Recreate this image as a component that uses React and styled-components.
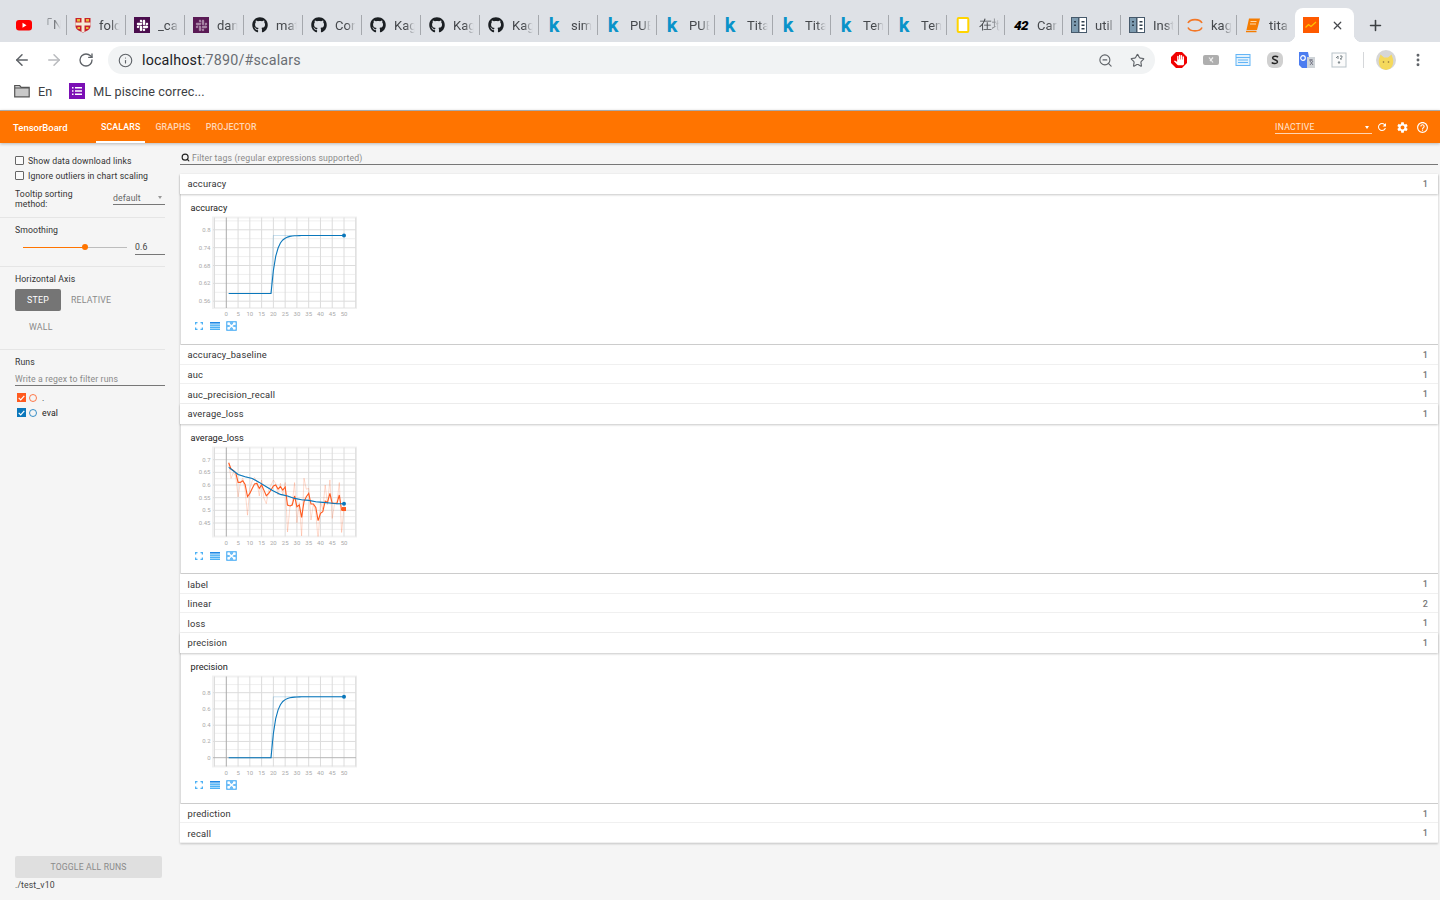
import React from "react";
import styled, { createGlobalStyle } from "styled-components";
import { ArrowLeft, ArrowRight, RotateCw, Info, ZoomOut, Star, X, Plus, MoreVertical, Search } from "lucide-react";
import { FaGithub, FaSlack } from "react-icons/fa";
import { MdRefresh, MdSettings, MdHelpOutline, MdPanTool } from "react-icons/md";

const Global = createGlobalStyle`
  html, body { margin: 0; padding: 0; background: #f5f5f5; }
  body { font-family: Roboto, "Liberation Sans", sans-serif; overflow: hidden; }
  * { box-sizing: border-box; }
`;

const Page = styled.div`display:flex;flex-direction:column;width:1440px;height:900px;overflow:hidden;`;

/* browser chrome */
const TabStrip = styled.div`display:flex;height:42px;background:#dee1e6;padding:8px 0 0 8px;align-items:stretch;`;
const Tab = styled.div`
  position:relative;display:flex;align-items:center;width:${p=>p.$w}px;height:34px;padding-left:8px;gap:8px;flex:none;
  &::after{content:"";display:${p=>p.$last?"none":"block"};position:absolute;right:0;top:7px;height:20px;width:1px;background:#a5a8ad;}
`;
const ActiveTab = styled.div`
  position:relative;display:flex;align-items:center;width:59px;height:34px;padding-left:8px;background:#fff;border-radius:8px 8px 0 0;flex:none;
  &::before,&::after{content:"";position:absolute;bottom:0;width:8px;height:8px;}
  &::before{left:-8px;background:radial-gradient(circle at 0 0,transparent 8px,#fff 8.5px);}
  &::after{right:-8px;background:radial-gradient(circle at 100% 0,transparent 8px,#fff 8.5px);}
`;
const TabClose = styled.span`display:flex;margin-left:12px;color:#45484c;`;
const NewTab = styled.span`display:flex;align-items:center;margin-left:13px;color:#3c4043;`;
const TabTitle = styled.span`
  display:block;width:26px;flex:none;overflow:hidden;white-space:nowrap;font-size:13px;color:#45484c;
  -webkit-mask-image:linear-gradient(to right,#000 45%,transparent 80%);mask-image:linear-gradient(to right,#000 45%,transparent 80%);
`;
const IconSlot = styled.span`display:flex;width:16px;height:16px;align-items:center;justify-content:center;flex:none;`;
const KaggleK = styled.span`font:700 20px/16px Roboto,sans-serif;color:#0a93c9;margin-left:-2px;`;
const FortyTwo = styled.span`font:italic 900 13.5px/16px Roboto,sans-serif;color:#000;letter-spacing:-.5px;`;
const SlackSquare = styled.span`display:flex;width:16px;height:16px;align-items:center;justify-content:center;background:${p=>p.$dim?"#5a1a55":"#4a0d4d"};color:${p=>p.$dim?"#a784a5":"#fff"};`;

const Toolbar = styled.div`display:flex;align-items:center;height:36px;background:#fff;padding-left:6px;`;
const NavBtn = styled.span`display:flex;width:32px;justify-content:center;color:${p=>p.$off?"#b9bbbe":"#5f6368"};`;
const Omnibox = styled.div`display:flex;align-items:center;flex:1;height:28px;margin-left:6px;border-radius:14px;background:#f1f3f4;padding:0 2px 0 10px;color:#5f6368;`;
const Url = styled.span`font-size:14.3px;letter-spacing:.17px;margin-left:9px;flex:1;color:#6a6e73;& b{font-weight:400;color:#202124;}`;
const OmniIcon = styled.span`display:flex;width:32px;justify-content:center;color:#5f6368;`;
const Extensions = styled.div`display:flex;align-items:center;margin-left:8px;margin-right:12px;`;
const Ext = styled.span`display:flex;width:32px;justify-content:center;`;
const ExtDivider = styled.span`width:1px;height:16px;background:#d5d7da;margin:0 12px 0 8px;`;
const Avatar = styled.span`display:flex;width:20px;height:20px;border-radius:50%;background:#d6d6d6;overflow:hidden;`;
const MenuBtn = styled.span`display:flex;width:20px;margin-left:12px;justify-content:center;color:#5f6368;`;

const Bookmarks = styled.div`display:flex;align-items:center;height:32px;padding-bottom:6px;background:#fff;padding-left:14px;font-size:12.6px;color:#3c4043;`;
const Bookmark = styled.span`display:flex;align-items:center;gap:8px;margin-right:${p=>p.$mr||0}px;letter-spacing:.1px;`;
const FormsIcon = styled.span`display:flex;width:16px;height:16px;background:#7b0fb5;align-items:center;justify-content:center;`;

/* tensorboard header */
const Header = styled.header`
  display:flex;align-items:center;height:33px;background:#ff7400;border-top:1px solid #a9a9a9;color:#fff;
  box-shadow:0 1px 3px rgba(0,0,0,.25);position:relative;z-index:2;padding-left:13px;
`;
const Brand = styled.span`font-size:9.5px;width:83px;font-weight:500;`;
const NavTab = styled.span`
  display:flex;align-items:center;height:32px;padding:0 5px;margin-right:${p=>p.$mr}px;font-size:8.8px;font-weight:500;letter-spacing:.14px;
  color:${p=>p.$on?"#fff":"rgba(255,255,255,.72)"};
  border-bottom:2px solid ${p=>p.$on?"#fff":"transparent"};padding-top:2px;
`;
const Spacer = styled.span`flex:1;`;
const RunSelect = styled.span`
  display:flex;justify-content:space-between;align-items:center;width:97px;height:12px;border-bottom:1px solid rgba(255,255,255,.7);
  font-size:8.6px;color:rgba(255,255,255,.85);margin-top:1px;letter-spacing:.3px;
`;
const Caret = styled.span`width:0;height:0;border:2.5px solid transparent;border-top:3px solid ${p=>p.$c};border-bottom:0;margin-right:${p=>p.$mr||0}px;`;
const HeadIcon = styled.span`display:flex;width:20px;justify-content:center;color:#fff;`;
const HeadIcons = styled.span`display:flex;margin-right:8px;margin-left:0;`;

/* body */
const Body = styled.div`display:flex;flex:1;min-height:0;background:#f5f5f5;`;
const Sidebar = styled.aside`display:flex;flex-direction:column;width:180px;flex:none;font-size:8.7px;color:#333;letter-spacing:.11px;`;
const Section = styled.section`width:165px;padding:${p=>p.$pt}px 0 ${p=>p.$pb}px 15px;border-bottom:${p=>p.$last?"none":"1px solid #e5e5e5"};`;
const CheckRow = styled.label`display:flex;align-items:center;height:15px;gap:4px;`;
const Check = styled.span`width:9px;height:9px;border:1px solid #666;border-radius:1px;background:#fafafa;`;
const TooltipRow = styled.div`display:flex;justify-content:space-between;margin-top:6px;line-height:10px;`;
const Select = styled.div`display:flex;justify-content:space-between;align-items:center;width:52px;height:16px;padding-top:2px;border-bottom:1px solid #777;color:#666;align-self:flex-start;`;
const Label = styled.div`line-height:10px;height:10px;color:#333;`;
const SliderRow = styled.div`display:flex;align-items:center;height:16px;margin-top:4px;padding-left:8px;`;
const Track = styled.div`position:relative;width:104px;height:1px;background:#bdbdbd;`;
const TrackFill = styled.div`height:1px;background:#ff7400;`;
const Knob = styled.span`position:absolute;top:-3px;width:6px;height:6px;border-radius:50%;background:#ff7400;`;
const NumInput = styled.div`width:30px;height:15px;margin-left:8px;padding-top:1px;border-bottom:1px solid #777;font-size:8.7px;line-height:12px;color:#444;`;
const AxisGroup = styled.div`display:flex;flex-wrap:wrap;row-gap:5px;margin-top:5px;`;
const AxisBtn = styled.span`
  display:flex;align-items:center;height:22px;padding:0 ${p=>p.$on?12:p.$p}px;border-radius:2px;font-size:8.8px;letter-spacing:.22px;
  background:${p=>p.$on?"#757575":"transparent"};color:${p=>p.$on?"#fff":"#8a8a8a"};
`;
const RunFilter = styled.div`height:12px;margin-top:7px;border-bottom:1px solid #777;color:#8a8a8a;line-height:10px;font-size:8.7px;letter-spacing:.14px;`;
const RunRow = styled.div`display:flex;align-items:center;height:15px;padding-left:2px;color:#222;`;
const RunBox = styled.span`display:flex;width:9px;height:9px;background:${p=>p.$c};align-items:center;justify-content:center;`;
const RunRing = styled.span`width:8px;height:8px;margin:0 5px 0 3px;border-radius:50%;border:1px solid ${p=>p.$c};opacity:.8;`;
const RunGap = styled.div`height:4px;`;
const SideFoot = styled.div`margin-top:auto;padding:0 0 10px 15px;`;
const ToggleAll = styled.div`display:flex;width:147px;height:22px;align-items:center;justify-content:center;background:#dfdfdf;border-radius:2px;color:#8a8a8a;font-size:8.6px;letter-spacing:.17px;`;
const LogDir = styled.div`margin-top:2px;height:10px;line-height:10px;color:#444;`;

const Main = styled.main`flex:1;min-width:0;padding-right:2px;`;
const TagFilter = styled.div`display:flex;align-items:center;gap:2px;height:13px;margin:9px 0;border-bottom:1px solid #777;font-size:8.7px;color:#8a8a8a;letter-spacing:.15px;padding-bottom:1px;`;
const FilterIcon = styled.span`display:flex;margin-left:1px;color:#222;`;
const Pane = styled.div`box-shadow:0 1px 2px rgba(0,0,0,.2);background:#fff;`;
const Row = styled.div`
  display:flex;justify-content:space-between;align-items:center;height:19.6px;padding:0 10px 0 7.5px;background:#fff;font-size:9.3px;color:#333;letter-spacing:.2px;
  box-shadow:${p=>p.$open?"0 1px 2px rgba(0,0,0,.22)":"inset 0 -1px 0 #f0f0f0"};position:relative;
`;
const Count = styled.span`font-size:9px;color:#777;font-weight:500;`;
const Card = styled.div`height:${p=>p.$h}px;padding:8px 0 0 0;background:#fff;border-left:1px solid #ddd;box-shadow:inset 0 -1px 0 #ccc;`;
const CardTitle = styled.div`height:12px;line-height:12px;padding-left:9.5px;font-size:9.2px;color:#222;`;
const ChartSvg = styled.svg`display:block;margin-left:-1px;`;
const ChartTools = styled.div`display:flex;height:14px;padding-left:10px;`;
const Tool = styled.span`display:flex;width:16px;justify-content:center;align-items:center;`;

const Favicon = ({ k }) => {
  if (k === "yt") return <svg width="16" height="16" viewBox="0 0 16 16"><rect y="3" width="16" height="10.5" rx="3" fill="#f00"/><path d="M6.5 5.8v5l4-2.5z" fill="#fff"/></svg>;
  if (k === "cam") return <svg width="16" height="16" viewBox="0 0 16 16"><path d="M.5 1h15v8c0 3.500-3.500 5-7.500 6.500C4 14 .5 12.500.5 9z" fill="#c8202c"/><path d="M6.500 1h3v14h-3zM.5 5.500h15v3H.5z" fill="#f4ead6"/><path d="M2 2h3v2.500H2zM11 2h3v2.500h-3zM2.500 10h2.500v2H2.500zM11 10h2.500v2H11z" fill="#e8b93a"/></svg>;
  if (k === "slack") return <SlackSquare><FaSlack size={13}/></SlackSquare>;
  if (k === "slack2") return <SlackSquare $dim><FaSlack size={13}/></SlackSquare>;
  if (k === "gh") return <FaGithub size={16} color="#1b1f23"/>;
  if (k === "k") return <KaggleK>k</KaggleK>;
  if (k === "yellow") return <svg width="16" height="16" viewBox="0 0 16 16"><rect x="2.700" y="1" width="10.600" height="14" rx="1" fill="#fff" stroke="#ffd400" strokeWidth="2"/></svg>;
  if (k === "42") return <FortyTwo>42</FortyTwo>;
  if (k === "doc") return <svg width="16" height="16" viewBox="0 0 16 16"><rect width="16" height="16" fill="#46596b"/><rect x="1" y="1" width="6" height="14" fill="#7d9bb0"/><rect x="8.500" y="1" width="6.500" height="14" fill="#fff"/><path d="M3 4h2v1.500H3zM3 7.500h2V9H3zM10.500 4h3v1.500h-3zM10.500 7.500h3V9h-3zM10.500 11h3v1.500h-3z" fill="#2f3e4c"/></svg>;
  if (k === "jup") return <svg width="16" height="16" viewBox="0 0 16 16" fill="none" stroke="#f37726" strokeWidth="1.600"><path d="M1 6c2-4.500 12-4.500 14 0"/><path d="M1 10.500c2 4.500 12 4.500 14 0"/></svg>;
  if (k === "book") return <svg width="16" height="16" viewBox="0 0 16 16"><path d="M4 1.500h11l-3 11.500H1.500z" fill="#f57c00"/><path d="M1 14.500h10.500" stroke="#f57c00" strokeWidth="1.500"/><path d="M5.500 4.500h6M5 7h6" stroke="#ffd9a8"/></svg>;
  return <svg width="16" height="16" viewBox="0 0 16 16"><rect width="16" height="16" fill="#ff5a00"/><path d="M2.500 10.500l3-3 2.500 2 5-4.500" fill="none" stroke="#ffc400" strokeWidth="1.200"/></svg>;
};

const tabs = [
  ["yt","「N"],["cam","fold"],["slack","_ca"],["slack2","dan"],["gh","mat"],["gh","Cor"],["gh","Kag"],["gh","Kag"],["gh","Kag"],
  ["k","sim"],["k","PUB"],["k","PUB"],["k","Tita"],["k","Tita"],["k","Ten"],["k","Ten"],["yellow","在地"],["42","Car"],["doc","util"],["doc","Inst"],["jup","kag"],["book","tita"],
];

const X_OF = s => 46.3 + s * 2.354; // svg x for a step
const STEPS = Array.from({ length: 50 }, (_, i) => i + 1);
const XTICKS = [0,5,10,15,20,25,30,35,40,45,50];

const stepUp = (lo, hi) => {
  let s = lo;
  return STEPS.map(t => { if (t >= 20) s = hi + (s - hi) * 0.6; return [t, s]; });
};
const rawStep = (lo, hi) => [[1,lo],[19,lo],[20,hi],[50,hi]];

const lossZ = [113,132,136,143,172,172,167,178,215,205,190,177,175,190,180,196,212,205,195,183,180,192,185,195,186,240,243,240,213,245,240,277,230,215,205,237,237,247,287,265,260,228,232,205,235,235,235,210,255,252];
const lossVal = lossZ.map(y => 0.7 - (y - 104) / 759.6);
const lossSmooth = lossVal.map((v, i) => [i + 1, v]);
const lossRaw = lossVal.map((v, i) => [i + 1, i === 0 ? v : (v - 0.6 * lossVal[i - 1]) / 0.4]);
const evalZ = [[1,127],[2,132],[5,148],[8,155],[11,160],[14,172],[17,185],[20,198],[23,208],[26,213],[29,220],[32,224],[35,226],[38,230],[41,232],[44,234],[47,236],[50,236]];
const evalVal = evalZ.map(([s, y]) => [s, 0.7 - (y - 104) / 759.6]);

const BLUE = "#0a77bb", ORANGE = "#ff5a1f";

const Chart = ({ id, ticks, v0, y0, k, h, series, zero }) => {
  const plotTop = 3.5, plotBottom = plotTop + h;
  const Y = v => y0 + (v0 - v) * k;
  const step = Math.abs(ticks[1] - ticks[0]);
  const minors = ticks.map(t => t - step / 2);
  minors.push(ticks[0] + step / 2);
  const path = pts => pts.map((p, i) => `${i ? "L" : "M"}${X_OF(p[0]).toFixed(1)} ${Y(p[1]).toFixed(1)}`).join("");
  return (
    <ChartSvg width="180" height="105" viewBox="0 0 180 105">
      <defs><clipPath id={id}><rect x="33" y={plotTop} width="143" height={h}/></clipPath></defs>
      <rect x="33" y={plotTop} width="143" height={h} fill="none" stroke="#f1f1f1" strokeWidth="2"/>
      {minors.map((v, i) => Y(v) > plotTop && Y(v) < plotBottom && <line key={i} x1="33" x2="176" y1={Y(v)} y2={Y(v)} stroke="#efefef"/>)}
      {[-5,5,10,15,20,25,30,35,40,45,50,55].map(s => <line key={s} x1={X_OF(s)} x2={X_OF(s)} y1={plotTop} y2={plotBottom} stroke="#dcdcdc"/>)}
      {ticks.map(t => <line key={t} x1="33" x2="176" y1={Y(t)} y2={Y(t)} stroke={zero && t === 0 ? "#b5b5b5" : "#dcdcdc"}/>)}
      <line x1={X_OF(0)} x2={X_OF(0)} y1={plotTop} y2={plotBottom} stroke="#aaa"/>
      {ticks.map(t => <text key={t} x="30.500" y={Y(t) + 2} textAnchor="end" fontSize="6" fill="#aaa" fontFamily="Roboto">{t}</text>)}
      {XTICKS.map(s => <text key={s} x={X_OF(s)} y={plotBottom + 8} textAnchor="middle" fontSize="6" fill="#aaa" fontFamily="Roboto">{s}</text>)}
      <g clipPath={`url(#${id})`}>
        {series.map((s, i) => <path key={"r"+i} d={path(s.raw)} fill="none" stroke={s.color} strokeOpacity=".22" strokeWidth="1"/>)}
        {series.map((s, i) => <path key={"s"+i} d={path(s.smooth)} fill="none" stroke={s.color} strokeWidth="1.100"/>)}
      </g>
      {series.map((s, i) => {
        const last = s.smooth[s.smooth.length - 1];
        return s.color === ORANGE
          ? <rect key={i} x={X_OF(last[0]) - 2} y={Y(last[1]) - 2} width="4" height="4" fill={s.color}/>
          : <circle key={i} cx={X_OF(last[0])} cy={Y(last[1])} r="2" fill={s.color}/>;
      })}
    </ChartSvg>
  );
};

const Tools = () => (
  <ChartTools>
    <Tool><svg width="8" height="8" viewBox="0 0 8 8" fill="none" stroke="#4db1f5" strokeWidth="1.300"><path d="M.6 2.500V.6h1.900M5.500.6h1.900v1.900M7.400 5.500v1.900H5.500M2.500 7.400H.6V5.500"/></svg></Tool>
    <Tool><svg width="10" height="8" viewBox="0 0 10 8"><rect width="10" height="1.600" fill="#1e88e5"/><rect y="2.400" width="10" height="1.500" fill="#4db1f5"/><rect y="4.500" width="10" height="1.500" fill="#4db1f5"/><rect y="6.500" width="10" height="1.500" fill="#4db1f5"/></svg></Tool>
    <Tool><svg width="11" height="10" viewBox="0 0 11 10"><rect width="11" height="10" rx="1" fill="#6cbcf6"/><path d="M2 2l7 6M9 2L2 8" stroke="#fff" strokeWidth="1.600"/><path d="M1.500 1.500h2.500v1.500H3v1H1.500zM9.500 1.500H7v1.500h1v1h1.500zM1.500 8.500h2.500V7H3V6H1.500zM9.500 8.500H7V7h1V6h1.500z" fill="#fff"/></svg></Tool>
  </ChartTools>
);

const ChartCard = ({ title, cardH, ...rest }) => (
  <Card $h={cardH}>
    <CardTitle>{title}</CardTitle>
    <Chart id={title} {...rest}/>
    <Tools/>
  </Card>
);

const tagRows = [
  { name: "accuracy", n: 1, chart: { cardH:151.6, ticks:[0.8,0.74,0.68,0.62,0.56], v0:0.8, y0:15.800, k:297.5, h:90.500,
      series:[{ color:BLUE, smooth:stepUp(0.586,0.781), raw:rawStep(0.586,0.781) }] } },
  { name: "accuracy_baseline", n: 1 },
  { name: "auc", n: 1 },
  { name: "auc_precision_recall", n: 1 },
  { name: "average_loss", n: 1, chart: { cardH:150.7, ticks:[0.7,0.65,0.6,0.55,0.5,0.45], v0:0.7, y0:15.700, k:253.2, h:89,
      series:[{ color:ORANGE, smooth:lossSmooth, raw:lossRaw },{ color:BLUE, smooth:evalVal, raw:evalVal }] } },
  { name: "label", n: 1 },
  { name: "linear", n: 2 },
  { name: "loss", n: 1 },
  { name: "precision", n: 1, chart: { cardH:151.2, ticks:[0.8,0.6,0.4,0.2,0], v0:0.8, y0:19.700, k:81.250, h:90, zero:true,
      series:[{ color:BLUE, smooth:stepUp(0,0.75), raw:rawStep(0,0.75) }] } },
  { name: "prediction", n: 1 },
  { name: "recall", n: 1 },
];

const CheckMark = () => <svg width="7" height="6" viewBox="0 0 7 6" fill="none" stroke="#fff" strokeWidth="1.200"><path d="M.7 2.800l2 2L6.300.8"/></svg>;

export default function App() {
  return (
    <Page>
      <Global/>
      <TabStrip>
        {tabs.map(([k, t], i) => (
          <Tab key={i} $w={i < 11 ? 59 : 58} $last={i === tabs.length - 1}>
            <IconSlot><Favicon k={k}/></IconSlot>
            <TabTitle>{t}</TabTitle>
          </Tab>
        ))}
        <ActiveTab>
          <IconSlot><Favicon k="tb"/></IconSlot>
          <TabClose><X size={13} strokeWidth={2.200}/></TabClose>
        </ActiveTab>
        <NewTab><Plus size={17} strokeWidth={2.200}/></NewTab>
      </TabStrip>
      <Toolbar>
        <NavBtn><ArrowLeft size={18} strokeWidth={2}/></NavBtn>
        <NavBtn $off><ArrowRight size={18} strokeWidth={2}/></NavBtn>
        <NavBtn><RotateCw size={16} strokeWidth={2}/></NavBtn>
        <Omnibox>
          <Info size={15} strokeWidth={1.800}/>
          <Url><b>localhost</b>:7890/#scalars</Url>
          <OmniIcon><ZoomOut size={15} strokeWidth={1.800}/></OmniIcon>
          <OmniIcon><Star size={15} strokeWidth={1.800}/></OmniIcon>
        </Omnibox>
        <Extensions>
          <Ext><svg width="16" height="16" viewBox="0 0 16 16"><path d="M5 0h6l5 5v6l-5 5H5l-5-5V5z" fill="#f00000"/><MdPanTool x="2.500" y="2.500" size={11} color="#fff"/></svg></Ext>
          <Ext><svg width="16" height="16" viewBox="0 0 16 16"><rect y="3" width="16" height="10" rx="2" fill="#aeaeae"/><path d="M6 5.500l4 5M10 5.500L7 9" stroke="#eee" strokeWidth="1.200"/></svg></Ext>
          <Ext><svg width="16" height="16" viewBox="0 0 16 16"><rect x="1" y="2.500" width="14" height="11" fill="#e3f2fd" stroke="#64b5f6"/><path d="M1 5.500h14M3 8h10M3 10.500h10" stroke="#64b5f6"/></svg></Ext>
          <Ext><svg width="16" height="16" viewBox="0 0 16 16"><rect width="16" height="16" rx="6" fill="#d0d0d0"/><path d="M11 5.200C10 4 6 3.800 5.600 5.800 5.300 8 10.700 7.500 10.500 10 10.200 12 6 12 4.800 10.500" fill="none" stroke="#222" strokeWidth="1.500"/></svg></Ext>
          <Ext><svg width="16" height="16" viewBox="0 0 16 16"><path d="M0 0h9l3 16H3l-3-3z" fill="#4c7df0"/><path d="M8 5h8v11H8z" fill="#cfd4d8"/><circle cx="4" cy="6" r="2.300" fill="none" stroke="#fff" strokeWidth="1.200"/><path d="M10 8h4M12 7v2M11 13l3-4M11 9l3 4" stroke="#667" strokeWidth=".8"/></svg></Ext>
          <Ext><svg width="16" height="16" viewBox="0 0 16 16"><rect x="1" y="1" width="14" height="14" fill="#fbfbfb" stroke="#b9c3c9"/><path d="M5 6l2-2v3M9 4h2v1.500L9 7h2M7 10h2l-1 1.500z" fill="none" stroke="#7a8488"/></svg></Ext>
          <ExtDivider/>
          <Avatar><svg width="20" height="20" viewBox="0 0 20 20"><path d="M3 9l1.500-4.500L8 7.500h4l3.500-3L17 9c1 4.500-1 11-7 11S2 13.500 3 9z" fill="#f5d95c"/><circle cx="7.500" cy="12" r=".8" fill="#8a6d3b"/><circle cx="12.500" cy="12" r=".8" fill="#8a6d3b"/></svg></Avatar>
          <MenuBtn><MoreVertical size={16} strokeWidth={2.400}/></MenuBtn>
        </Extensions>
      </Toolbar>
      <Bookmarks>
        <Bookmark $mr={17}>
          <svg width="16" height="14" viewBox="0 0 16 14"><path d="M.7 12.800V1.500h5l1.500 1.800h8v9.500z" fill="#c9c9c9" stroke="#555" strokeWidth="1.200"/><path d="M1 4h14" stroke="#555"/></svg>
          En
        </Bookmark>
        <Bookmark>
          <FormsIcon><svg width="10" height="10" viewBox="0 0 10 10" fill="#fff"><path d="M0 1h1.500v1.500H0zM3 1h7v1.500H3zM0 4.200h1.500v1.500H0zM3 4.200h7v1.500H3zM0 7.500h1.500V9H0zM3 7.500h7V9H3z"/></svg></FormsIcon>
          ML piscine correc...
        </Bookmark>
      </Bookmarks>
      <Header>
        <Brand>TensorBoard</Brand>
        <NavTab $on $mr={5}>SCALARS</NavTab>
        <NavTab $mr={5}>GRAPHS</NavTab>
        <NavTab $mr={0}>PROJECTOR</NavTab>
        <Spacer/>
        <RunSelect>INACTIVE<Caret $c="#fff" $mr={3}/></RunSelect>
        <HeadIcons>
          <HeadIcon><MdRefresh size={12}/></HeadIcon>
          <HeadIcon><MdSettings size={13}/></HeadIcon>
          <HeadIcon><MdHelpOutline size={13}/></HeadIcon>
        </HeadIcons>
      </Header>
      <Body>
        <Sidebar>
          <Section $pt={10} $pb={8}>
            <CheckRow><Check/>Show data download links</CheckRow>
            <CheckRow><Check/>Ignore outliers in chart scaling</CheckRow>
            <TooltipRow>
              <span>Tooltip sorting<br/>method:</span>
              <Select>default<Caret $c="#999" $mr={3}/></Select>
            </TooltipRow>
          </Section>
          <Section $pt={7} $pb={11}>
            <Label>Smoothing</Label>
            <SliderRow>
              <Track><TrackFill style={{ width: "60%" }}/><Knob style={{ left: "56.500%" }}/></Track>
              <NumInput>0.6</NumInput>
            </SliderRow>
          </Section>
          <Section $pt={7} $pb={11}>
            <Label>Horizontal Axis</Label>
            <AxisGroup>
              <AxisBtn $on>STEP</AxisBtn>
              <AxisBtn $p={10}>RELATIVE</AxisBtn>
              <AxisBtn $p={14}>WALL</AxisBtn>
            </AxisGroup>
          </Section>
          <Section $pt={7} $pb={0} $last>
            <Label>Runs</Label>
            <RunFilter>Write a regex to filter runs</RunFilter>
            <RunGap/>
            <RunRow><RunBox $c="#ff5a1f"><CheckMark/></RunBox><RunRing $c="#ff5a1f"/>.</RunRow>
            <RunRow><RunBox $c="#0a77bb"><CheckMark/></RunBox><RunRing $c="#0a77bb"/>eval</RunRow>
          </Section>
          <SideFoot>
            <ToggleAll>TOGGLE ALL RUNS</ToggleAll>
            <LogDir>./test_v10</LogDir>
          </SideFoot>
        </Sidebar>
        <Main>
          <TagFilter><FilterIcon><Search size={9} strokeWidth={3}/></FilterIcon>Filter tags (regular expressions supported)</TagFilter>
          <Pane>
            {tagRows.map(r => (
              <React.Fragment key={r.name}>
                <Row $open={!!r.chart}><span>{r.name}</span><Count>{r.n}</Count></Row>
                {r.chart && <ChartCard title={r.name} {...r.chart}/>}
              </React.Fragment>
            ))}
          </Pane>
        </Main>
      </Body>
    </Page>
  );
}
